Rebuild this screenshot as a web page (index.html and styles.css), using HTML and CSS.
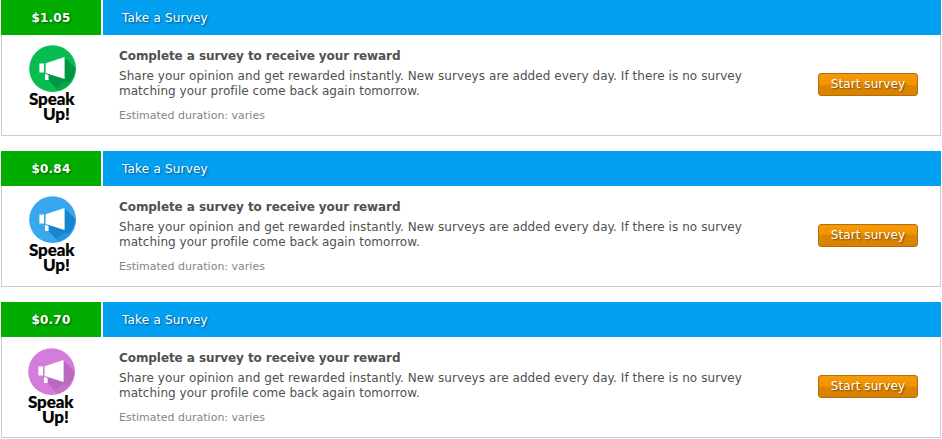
FILE: index.html
```html
<!DOCTYPE html>
<html lang="en">
<head>
<meta charset="utf-8">
<title>Surveys</title>
<link rel="stylesheet" href="styles.css">
</head>
<body>
<svg class="defs" aria-hidden="true">
  <symbol id="megaphone" viewBox="0 0 48 48">
    <circle cx="23.6" cy="23.7" r="23.4"/>
    <path class="shade" d="M35.3 12 L46.5 23 Q46 31 41 37 L33 38 L27 43 L19 34.5 L19 28 L35 33Z"/>
    <path class="shade soft" d="M41 37 Q36 45 29 46 L27 43 L33 38Z"/>
    <path fill="#fff" d="M16.6 18.3 L35.6 12 V34 L16.6 28Z M10.4 18.6h4.6v9h-4.6z M16 29l3.6 1v5H16z"/>
  </symbol>
</svg>
<main class="offers">
  <article class="offer">
    <header class="bar"><div class="price">$1.05</div><div class="kind">Take a Survey</div></header>
    <div class="body">
      <div class="logo green"><svg><use href="#megaphone"/></svg><div class="speak">Speak</div><div class="up">Up!</div></div>
      <div class="info"><h2>Complete a survey to receive your reward</h2>
        <p class="text">Share your opinion and get rewarded instantly. New surveys are added every day. If there is no survey<br><span class="second">matching your profile come back again tomorrow.</span></p>
        <p class="duration">Estimated duration: varies</p></div>
      <button class="start">Start survey</button>
    </div>
  </article>
  <article class="offer">
    <header class="bar"><div class="price">$0.84</div><div class="kind">Take a Survey</div></header>
    <div class="body">
      <div class="logo blue"><svg><use href="#megaphone"/></svg><div class="speak">Speak</div><div class="up">Up!</div></div>
      <div class="info"><h2>Complete a survey to receive your reward</h2>
        <p class="text">Share your opinion and get rewarded instantly. New surveys are added every day. If there is no survey<br><span class="second">matching your profile come back again tomorrow.</span></p>
        <p class="duration">Estimated duration: varies</p></div>
      <button class="start">Start survey</button>
    </div>
  </article>
  <article class="offer">
    <header class="bar"><div class="price">$0.70</div><div class="kind">Take a Survey</div></header>
    <div class="body">
      <div class="logo pink"><svg><use href="#megaphone"/></svg><div class="speak">Speak</div><div class="up">Up!</div></div>
      <div class="info"><h2>Complete a survey to receive your reward</h2>
        <p class="text">Share your opinion and get rewarded instantly. New surveys are added every day. If there is no survey<br><span class="second">matching your profile come back again tomorrow.</span></p>
        <p class="duration">Estimated duration: varies</p></div>
      <button class="start">Start survey</button>
    </div>
  </article>
</main>
</body>
</html>
```
FILE: styles.css
```css
* { box-sizing: border-box; }
body { margin: 0; background: #fff; font-family: Verdana, "DejaVu Sans", sans-serif; font-size: 12px; color: #505050; overflow: hidden; }
.defs { display: none; }
.offers { display: flex; flex-direction: column; gap: 15px; padding: 0 1px; }
.offer { width: 940px; height: 136px; }
.bar { display: flex; gap: 2px; height: 35px; line-height: 36px; color: #fff; text-shadow: 1px 1px 2px rgba(0,0,0,.5); }
.price { width: 100px; background: #00ad00; text-align: center; font-weight: bold; letter-spacing: .2px; }
.kind { flex: 1; background: #039ff0; padding-left: 19px; letter-spacing: .2px; }
.body { display: flex; height: 101px; border: 1px solid #ccc; border-top: 0; }
.logo { width: 117px; padding: 10px 0 0 27px; color: #000; font: 900 17px/14px Lato, sans-serif; letter-spacing: -.1px; -webkit-text-stroke: .2px #000; }
.logo svg { display: block; width: 48px; height: 48px; }
.speak { margin-top: -1px; }
.up { padding: 1px 0 0 14px; }
.green { fill: #08bd50; --shade: #009542; }
.blue { fill: #38a7ee; --shade: #1685cf; }
.pink { fill: #d47cd9; --shade: #ba69bd; padding: 11px 0 0 26px; }
.shade { fill: var(--shade); }
.soft { opacity: .55; }
.info { width: 699px; white-space: nowrap; }
h2 { margin: 14px 0 5px; font-size: 12px; line-height: 15px; letter-spacing: -.075px; }
.text { margin: 0; line-height: 15px; letter-spacing: .07px; }
.second { letter-spacing: .03px; }
.duration { margin: 10px 0 0; font-size: 11px; line-height: 13px; color: #858585; }
.start { width: 100px; height: 23px; margin-top: 38px; padding: 0 0 2px; border: 1px solid #b46c0c; border-radius: 3px; color: #fff; font: 12px Verdana, "DejaVu Sans", sans-serif; letter-spacing: .07px; text-shadow: 1px 1px 2px rgba(0,0,0,.5); background: linear-gradient(#f49a08 0, #f29200 50%, #dc8500 50%, #d88200 100%); }
```
